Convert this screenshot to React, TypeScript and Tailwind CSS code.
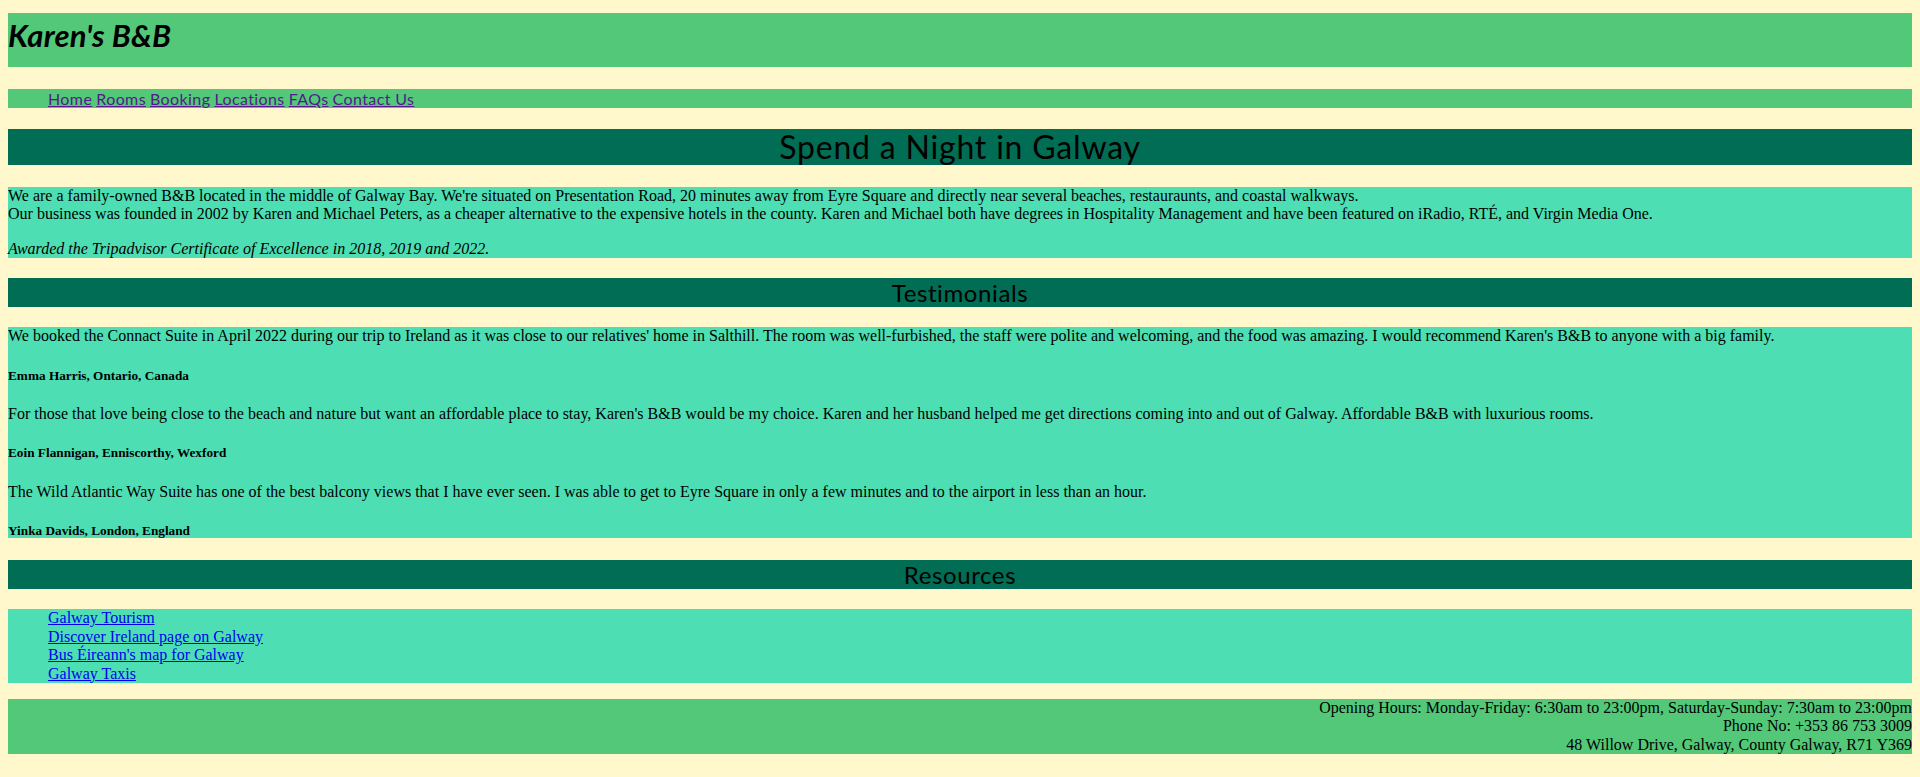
import React from "react";

const nav = ["Home", "Rooms", "Booking", "Locations", "FAQs", "Contact Us"];

const testimonials = [
  {
    text: "We booked the Connact Suite in April 2022 during our trip to Ireland as it was close to our relatives' home in Salthill. The room was well-furbished, the staff were polite and welcoming, and the food was amazing. I would recommend Karen's B&B to anyone with a big family.",
    who: "Emma Harris, Ontario, Canada",
  },
  {
    text: "For those that love being close to the beach and nature but want an affordable place to stay, Karen's B&B would be my choice. Karen and her husband helped me get directions coming into and out of Galway. Affordable B&B with luxurious rooms.",
    who: "Eoin Flannigan, Enniscorthy, Wexford",
  },
  {
    text: "The Wild Atlantic Way Suite has one of the best balcony views that I have ever seen. I was able to get to Eyre Square in only a few minutes and to the airport in less than an hour.",
    who: "Yinka Davids, London, England",
  },
];

const resources = [
  "Galway Tourism",
  "Discover Ireland page on Galway",
  "Bus Éireann's map for Galway",
  "Galway Taxis",
];

export default function App() {
  return (
    <div className="min-h-screen bg-[#fff8cc] px-[8px] pt-[13px] pb-[24px] font-['Liberation_Serif',serif] text-[16px] leading-[18.4px] text-black">
      <div className="h-[54px] bg-[#52c878] pt-[4px]">
        <h1 className="font-['Lato',sans-serif] text-[31px] font-bold italic leading-[36px] tracking-[0.2px]">
          Karen's B&amp;B
        </h1>
      </div>

      <ul className="mt-[22px] flex h-[19px] gap-[4px] bg-[#52c878] pl-[40px] font-['Lato',sans-serif] text-[16px] leading-[19px] tracking-[0.4px]">
        {nav.map((n) => (
          <li key={n}>
            <a href="#" className="text-[#551a8b] underline">
              {n}
            </a>
          </li>
        ))}
      </ul>

      <h1 className="mt-[21px] bg-[#006d54] text-center font-['Lato',sans-serif] text-[32px] leading-[36px] tracking-[0.8px]">
        Spend a Night in Galway
      </h1>

      <div className="mt-[22px] bg-[#4ddfb3]">
        <p>
          We are a family-owned B&amp;B located in the middle of Galway Bay. We're situated on Presentation Road, 20 minutes away from Eyre Square and directly near several beaches, restauraunts, and coastal walkways.
          <br />
          Our business was founded in 2002 by Karen and Michael Peters, as a cheaper alternative to the expensive hotels in the county. Karen and Michael both have degrees in Hospitality Management and have been featured on iRadio, RTÉ, and Virgin Media One.
        </p>
        <p className="mt-[16px] italic">
          Awarded the Tripadvisor Certificate of Excellence in 2018, 2019 and 2022.
        </p>
      </div>

      <h2 className="mt-[20px] bg-[#006d54] text-center font-['Lato',sans-serif] text-[24px] leading-[29px] tracking-[0.6px]">
        Testimonials
      </h2>

      <div className="mt-[20px] bg-[#4ddfb3]">
        {testimonials.map((t, i) => (
          <div key={i} className={i > 0 ? "mt-[22px]" : ""}>
            <p>{t.text}</p>
            <h5 className="mt-[22px] text-[13.28px] font-bold leading-[15.3px]">{t.who}</h5>
          </div>
        ))}
      </div>

      <h2 className="mt-[22px] bg-[#006d54] text-center font-['Lato',sans-serif] text-[24px] leading-[29px] tracking-[0.6px]">
        Resources
      </h2>

      <ul className="mt-[20px] bg-[#4ddfb3] pl-[40px]">
        {resources.map((r) => (
          <li key={r}>
            <a href="#" className="text-[#0000ee] underline">
              {r}
            </a>
          </li>
        ))}
      </ul>

      <footer className="mt-[16px] bg-[#52c878] text-right">
        Opening Hours: Monday-Friday: 6:30am to 23:00pm, Saturday-Sunday: 7:30am to 23:00pm
        <br />
        Phone No: +353 86 753 3009
        <br />
        48 Willow Drive, Galway, County Galway, R71 Y369
      </footer>
    </div>
  );
}
